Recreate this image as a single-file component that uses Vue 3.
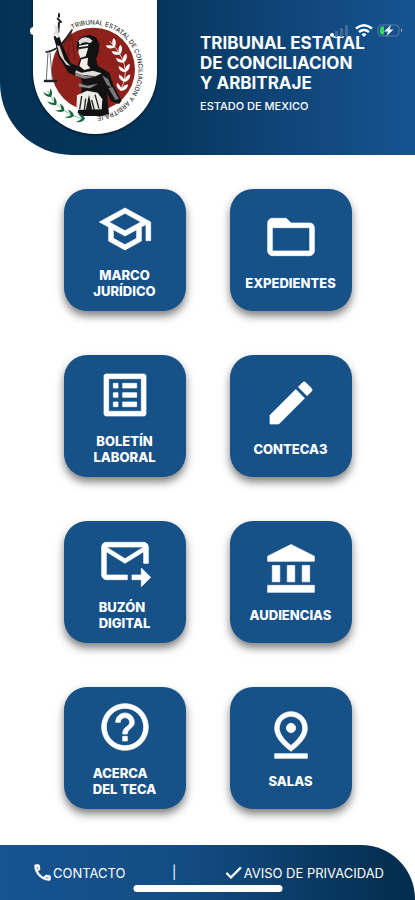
<template>
  <div class="screen">
    <header class="header">
      <div class="crest">
        <svg viewBox="100 0 372 402" role="img" aria-label="Tribunal Estatal de Conciliacion y Arbitraje">
          <defs>
            <path id="crest-ring" d="M217 88A138 138 0 1 1 240 344" />
          </defs>
          <circle cx="281" cy="208" r="125" fill="#8f211d" />
          <text class="crest-text"><textPath href="#crest-ring">TRIBUNAL ESTATAL DE CONCILIACION Y ARBITRAJE</textPath></text>

          <!-- scales -->
          <g fill="none" stroke="#222" stroke-linecap="round">
            <path d="M178 42v8M174 56l10 10M178 68l-2 28" stroke-width="6" />
            <path d="M166 112l14 42" stroke-width="8" />
            <path d="M139 156q28-2 52-30l26-36" stroke-width="5" />
            <path d="M145 158l-5 82M151 158l7 82" stroke-width="2" />
            <path d="M136 243h33" stroke-width="8" />
            <path d="M216 94l-32 60M214 96l12 82M212 100l-8 76" stroke="#4b1512" stroke-width="2" />
          </g>
          <path d="M160 72l8 16-10 22 12-8 8 12-2-30z" fill="#ddd" />

          <!-- figure -->
          <path d="M165 118l14-8 8 22 26 58 22 8 8-28-12-26 2-20 14-14 22-6 20 8 10 20-2 26-8 18 6 22 34 20 12 36 25 48-8 10-24-8-12-26 6 64-22 6h-60l-12-10 8-48 6-34-4-22-38-16-30-50z" fill="#121212" />
          <path d="M236 122q22-20 43 0l-8 8q-16-8-31 4z" fill="#ddd" />
          <path d="M238 137l28-5-2 17-6 20-16 5-6-16z" fill="#f0ece8" />
          <path d="M236 142l29-4v5l-28 5z" fill="#1b1b1b" />
          <path d="M245 178l20-5-2 21 9 11-18 5-15-12z" fill="#f3eeea" />
          <path d="M172 136l8 2 14 40 18 20-12-4-20-28z" fill="#d9d4d0" />
          <path d="M228 211l18 7 34-6 26 8-18 9-38-4-22 4z" fill="#dedbd8" />
          <path d="M226 216l32 12 32 2-36 6-24-8zM237 250l26 7 32-6-24 14-33-5z" fill="#8b8987" />
          <path d="M232 286l30-14 32 6 14 20-2 30-76 2z" fill="#eeece9" />
          <path d="M307 226l19 12 10 25-14-8zM326 264l12-3 20 36-11 2z" fill="#777" />
          <path d="M246 288l-6 40M286 284l12 42M258 296l-4 34M276 300l8 30" stroke="#222" stroke-width="4" fill="none" />
          <path d="M268 284l-10 46h20z" fill="#1b1b1b" />

          <!-- laurel branches -->
          <path d="M331 124q46 48 46 93 0 28-12 47" stroke="#e9c9c4" stroke-width="3" fill="none" />
          <g fill="#fff">
            <path v-for="leaf in laurel" :key="leaf" :transform="leaf" d="M0 12Q-20 6-17-9-7-4 0 5 4-9 16-12 18 5 0 12z" />
          </g>
          <path d="M144 272q27 65 107 86" stroke="#4e9068" stroke-width="2" fill="none" />
          <g fill="#17683c">
            <path v-for="leaf in branch" :key="leaf" :transform="leaf" d="M-15-11Q4-13 9 0 2 14-16 13-4 8 0 0-6-6-15-11z" />
          </g>
        </svg>
      </div>
      <div class="heading">
        <h1>TRIBUNAL ESTATAL<br />DE CONCILIACION<br />Y ARBITRAJE</h1>
        <p>ESTADO DE MEXICO</p>
      </div>
      <span class="notch-dot"></span>
      <svg class="status" viewBox="0 0 76 18" aria-hidden="true">
        <circle cx="4" cy="13" r="2" fill="#fff" />
        <g fill="#3f6c99">
          <rect x="7" y="9" width="3" height="6" rx="1" />
          <rect x="12" y="6" width="3" height="9" rx="1" />
          <rect x="17" y="3" width="3" height="12" rx="1" />
        </g>
        <g fill="none" stroke="#fff" stroke-width="2.4">
          <path d="M28 6.500q8-6.500 16 0" />
          <path d="M31 10q5-4 10 0" />
        </g>
        <path d="M33.500 12.300q2.500-2 5 0L36 15z" fill="#fff" />
        <rect x="50" y="3" width="21" height="11" rx="3.500" fill="none" stroke="#587f9f" />
        <path d="M73 6.500q2.500 2 0 4z" fill="#87a3bc" />
        <path d="M54 4.500h2v8h-2q-2 0-2-2v-4q0-2 2-2z" fill="#36d45b" />
        <path d="M63 3l-7 6.500h4L58.500 14l7-6.500h-4z" fill="#fff" />
      </svg>
    </header>

    <main class="menu">
      <button v-for="item in items" :key="item.label" type="button" class="tile">
        <svg viewBox="0 0 24 24" aria-hidden="true"><path :d="item.icon" /></svg>
        <span class="label" :class="{ left: item.left }">{{ item.label }}</span>
      </button>
    </main>

    <footer class="footer">
      <a href="#contacto">
        <svg viewBox="0 0 24 24" aria-hidden="true"><path :d="phone" /></svg>
        <span>CONTACTO</span>
      </a>
      <span class="divider">|</span>
      <a href="#privacidad">
        <svg viewBox="0 0 24 24" aria-hidden="true"><path :d="check" /></svg>
        <span>AVISO DE PRIVACIDAD</span>
      </a>
      <span class="home-bar"></span>
    </footer>
  </div>
</template>

<script setup>
const items = [
  {
    label: 'MARCO\nJURÍDICO',
    icon: 'M12 3 1 9l4 2.180v6L12 21l7-3.820v-6l2-1.090V17h2V9L12 3zm6.820 6L12 12.720 5.180 9 12 5.280 18.820 9zM17 15.990l-5 2.730-5-2.730v-3.720L12 15l5-2.730v3.720z',
  },
  {
    label: 'EXPEDIENTES',
    icon: 'M20 6h-8l-2-2H4c-1.100 0-1.990.9-1.990 2L2 18c0 1.100.9 2 2 2h16c1.100 0 2-.9 2-2V8c0-1.100-.9-2-2-2zm0 12H4V8h16v10z',
  },
  {
    label: 'BOLETÍN\nLABORAL',
    icon: 'M19 5v14H5V5h14m1.100-2H3.900c-.5 0-.9.4-.9.9v16.200c0 .4.4.9.9.9h16.200c.4 0 .9-.5.9-.9V3.900c0-.5-.5-.9-.9-.9zM11 7h6v2h-6V7zm0 4h6v2h-6v-2zm0 4h6v2h-6v-2zM7 7h2v2H7V7zm0 4h2v2H7v-2zm0 4h2v2H7v-2z',
  },
  {
    label: 'CONTECA3',
    icon: 'M3 17.250V21h3.750L17.810 9.940l-3.750-3.750L3 17.250zM20.710 7.040c.39-.39.39-1.020 0-1.410l-2.340-2.340a1 1 0 0 0-1.410 0l-1.830 1.830 3.750 3.750 1.830-1.830z',
  },
  {
    label: 'BUZÓN\nDIGITAL',
    left: true,
    icon: 'M4 18V8l8 5 8-5v5h2V6c0-1.100-.9-2-2-2H4c-1.100 0-2 .9-2 2v12c0 1.100.9 2 2 2h9v-2H4zM20 6l-8 5-8-5h16zM19 15l4 4-4 4v-3h-4v-2h4v-3z',
  },
  {
    label: 'AUDIENCIAS',
    icon: 'M4 10.500h3.200v7H4zM10.400 10.500h3.200v7h-3.200zM16.800 10.500H20v7h-3.200zM2 19h20v3H2zM12 1.500 2 6.500V8.700h20V6.500z',
  },
  {
    label: 'ACERCA\nDEL TECA',
    left: true,
    icon: 'M11 18h2v-2h-2v2zm1-16C6.480 2 2 6.480 2 12s4.480 10 10 10 10-4.480 10-10S17.520 2 12 2zm0 18c-4.410 0-8-3.590-8-8s3.590-8 8-8 8 3.590 8 8-3.590 8-8 8zm0-14c-2.210 0-4 1.790-4 4h2c0-1.100.9-2 2-2s2 .9 2 2c0 2-3 1.750-3 5h2c0-2.250 3-2.500 3-5 0-2.210-1.790-4-4-4z',
  },
  {
    label: 'SALAS',
    icon: 'M12 4c1.930 0 5 1.400 5 5.150 0 2.160-1.720 4.670-5 7.320-3.280-2.650-5-5.170-5-7.320C7 5.400 10.070 4 12 4m0-2C8.730 2 5 4.460 5 9.150c0 3.120 2.330 6.410 7 9.850 4.670-3.440 7-6.730 7-9.850C19 4.460 15.270 2 12 2zm0 5a2 2 0 1 0 0 4 2 2 0 0 0 0-4zM5 20h14v2H5z',
  },
]

const phone =
  'M6.540 5c.06.89.21 1.760.45 2.590l-1.200 1.200c-.41-1.200-.67-2.470-.76-3.790h1.510m9.860 12.020c.85.24 1.720.39 2.600.45v1.490c-1.320-.09-2.590-.35-3.800-.75l1.200-1.190M7.500 3H4c-.55 0-1 .45-1 1 0 9.390 7.610 17 17 17 .55 0 1-.45 1-1v-3.490c0-.55-.45-1-1-1-1.240 0-2.450-.2-3.570-.57-.36-.12-.75-.03-1.020.24l-2.200 2.200c-2.830-1.450-5.150-3.760-6.590-6.590l2.200-2.200c.28-.28.36-.67.25-1.020C8.700 6.450 8.500 5.250 8.500 4c0-.55-.45-1-1-1z'
const check = 'M9 16.170 4.830 12l-1.420 1.410L9 19 21 7l-1.410-1.410z'

const laurel = [
  'translate(337 133) rotate(-38)',
  'translate(355 153) rotate(-30)',
  'translate(368 177) rotate(-18)',
  'translate(375 205) rotate(-6)',
  'translate(375 234) rotate(4)',
  'translate(367 261) rotate(14)',
]
const branch = [
  'translate(149 283) rotate(62)',
  'translate(163 308) rotate(50)',
  'translate(186 328) rotate(34)',
  'translate(214 345) rotate(22)',
  'translate(247 355) rotate(8)',
]
</script>

<style>
body {
  margin: 0;
  background: #fff;
}
</style>

<style scoped>
.screen {
  display: flex;
  flex-direction: column;
  min-height: 100vh;
  font-family: Inter, "Liberation Sans", sans-serif;
  color: #fff;
}
.header {
  position: relative;
  display: flex;
  align-items: flex-start;
  gap: 43px;
  box-sizing: border-box;
  height: 155px;
  padding-left: 33px;
  border-bottom-left-radius: 72px;
  background: linear-gradient(90deg, #043256 0%, #06365d 40%, #0f467a 70%, #165390 100%);
}
.crest {
  flex: none;
  width: 124px;
  height: 134px;
  border-radius: 0 0 62px 62px;
  background: #fff;
  box-shadow: 0 1px 3px rgba(0, 0, 0, 0.6);
}
.crest svg {
  display: block;
  width: 100%;
  height: 100%;
}
.crest-text {
  font-size: 19px;
  font-weight: 500;
  fill: #333;
}
.heading {
  padding-top: 33px;
}
h1 {
  margin: 0;
  font-size: 17px;
  font-weight: 700;
  line-height: 20px;
  white-space: nowrap;
}
.heading p {
  margin: 5px 0 0;
  font-size: 11px;
  font-weight: 500;
  line-height: 16px;
}
.notch-dot {
  position: absolute;
  top: 27px;
  left: 30px;
  width: 8px;
  height: 8px;
  border-radius: 50%;
  background: #fff;
}
.status {
  position: absolute;
  top: 22px;
  right: 11px;
  width: 76px;
  height: 18px;
}

.menu {
  flex: 1;
  display: grid;
  grid-template-columns: repeat(2, 122px);
  grid-auto-rows: 122px;
  gap: 44px;
  justify-content: center;
  align-content: start;
  padding: 34px 0 36px;
}
.tile {
  display: flex;
  flex-direction: column;
  align-items: center;
  justify-content: center;
  gap: 10px;
  padding: 0 0 1px;
  border: 0;
  border-radius: 23px;
  background: #165188;
  box-shadow: 0 5px 8px rgba(0, 0, 0, 0.5);
  color: inherit;
  font: inherit;
  cursor: pointer;
}
.tile svg {
  width: 56px;
  height: 56px;
  fill: currentColor;
  stroke: currentColor;
  stroke-width: 0.3;
}
.label {
  font-size: 13px;
  font-weight: 800;
  line-height: 16px;
  white-space: pre;
}
.label.left {
  text-align: left;
}

.footer {
  position: relative;
  display: flex;
  align-items: flex-start;
  justify-content: space-between;
  box-sizing: border-box;
  height: 55px;
  padding: 17px 31px 0 32px;
  border-top-right-radius: 54px;
  background: linear-gradient(90deg, #165390 0%, #124c83 45%, #08375f 80%, #032c4d 100%);
  font-size: 13px;
  line-height: 20px;
}
.footer a {
  display: flex;
  align-items: center;
  color: inherit;
  text-decoration: none;
}
.footer svg {
  width: 21px;
  height: 21px;
  fill: currentColor;
  stroke: currentColor;
  stroke-width: 0.8;
}
.home-bar {
  position: absolute;
  bottom: 8px;
  left: 50%;
  width: 149px;
  height: 7px;
  border-radius: 4px;
  background: #fff;
  transform: translateX(-50%);
}
</style>
